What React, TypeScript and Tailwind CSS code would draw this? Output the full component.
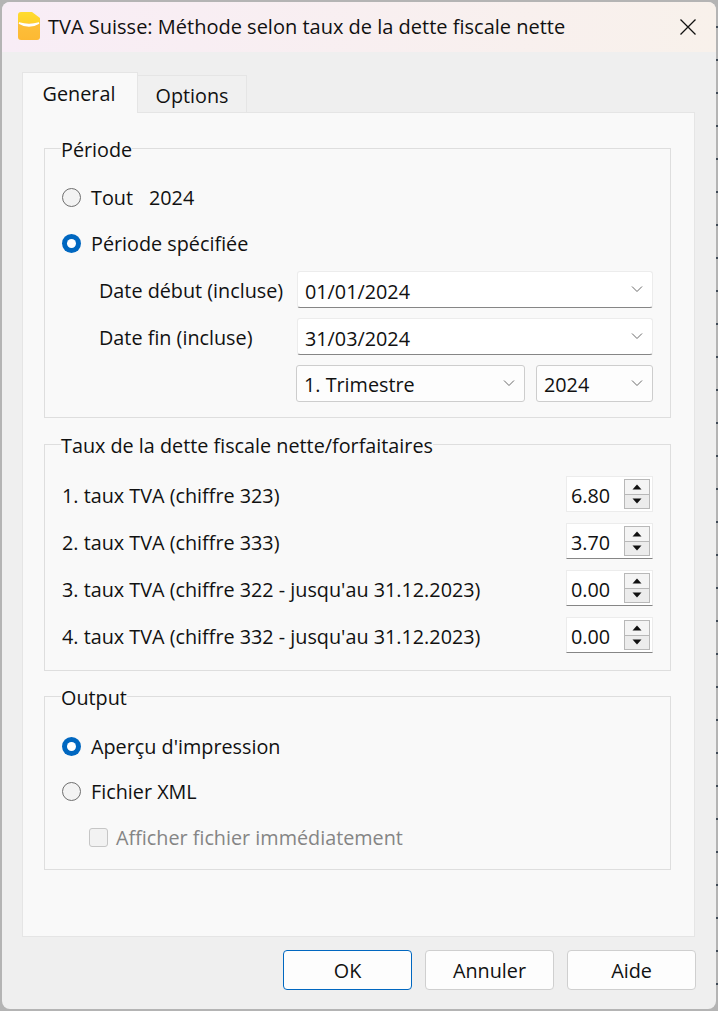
import { ReactNode } from "react";

const Chevron = () => (
  <svg width="12" height="8" viewBox="0 0 12 8" fill="none" className="shrink-0 -translate-y-[1px]">
    <path d="M1 1.5 L6 6.5 L11 1.5" stroke="#6a6a6a" strokeWidth="1" />
  </svg>
);

const Radio = ({ checked = false }: { checked?: boolean }) =>
  checked ? (
    <span className="flex h-[19px] w-[19px] shrink-0 items-center justify-center rounded-full bg-[#0067c0]">
      <span className="h-[9px] w-[9px] rounded-full bg-white" />
    </span>
  ) : (
    <span className="h-[19px] w-[19px] shrink-0 rounded-full border border-[#6f6f6f] bg-[#f3f3f3]" />
  );

// text sits a touch lower than the box centre, as in the reference
const Text = ({ children, className }: { children: ReactNode; className?: string }) => (
  <span className={`translate-y-[1px] ${className ?? ""}`}>{children}</span>
);

const Group = ({ title, className, children }: { title: string; className: string; children: ReactNode }) => (
  <fieldset className={`ml-[21px] mr-[23px] border border-[#dedede] pl-[17px] pr-[17px] ${className}`}>
    <legend className="-ml-px h-[26px] px-0 leading-[26px]">
      <span className="inline-block translate-y-[2px]">{title}</span>
    </legend>
    {children}
  </fieldset>
);

const Combo = ({ value, className }: { value: string; className: string }) => (
  <div
    className={`flex h-[37px] items-center justify-between rounded-[3px] border border-[#ececec] border-b-[#868686] bg-white pl-[7px] pr-[9px] ${className}`}
  >
    <span className="translate-y-[2px]">{value}</span>
    <Chevron />
  </div>
);

const Select = ({ value, className }: { value: string; className: string }) => (
  <div
    className={`flex h-[37px] items-center justify-between rounded-[3px] border border-[#cdcdcd] bg-[#fdfdfd] pl-[7px] pr-[9px] ${className}`}
  >
    <Text>{value}</Text>
    <Chevron />
  </div>
);

const Spin = ({ value, focused = false }: { value: string; focused?: boolean }) => (
  <div
    className={`flex h-[36px] w-[87px] items-center justify-between border border-[#ececec] bg-white pl-[4px] pr-[2px] ${
      focused ? "" : "border-b-[#868686]"
    }`}
  >
    <span className="translate-y-[2px]">{value}</span>
    <div className="flex h-[30px] w-[26px] flex-col border border-[#b8b8b8] bg-[#efefef]">
      <div className="flex flex-1 items-center justify-center border-b border-[#b8b8b8] bg-[#f4f4f4]">
        <svg width="10" height="6" viewBox="0 0 10 6">
          <path d="M5 0.5 L9.5 5.5 H0.5 Z" fill="#111" />
        </svg>
      </div>
      <div className="flex flex-1 items-center justify-center bg-[#ececec]">
        <svg width="10" height="6" viewBox="0 0 10 6">
          <path d="M0.5 0.5 H9.5 L5 5.5 Z" fill="#111" />
        </svg>
      </div>
    </div>
  </div>
);

const RateRow = ({ label, value, focused, className }: { label: string; value: string; focused?: boolean; className?: string }) => (
  <div className={`flex items-center justify-between ${className ?? ""}`}>
    <span className="translate-y-[2px]">{label}</span>
    <Spin value={value} focused={focused} />
  </div>
);

const DialogButton = ({ label, primary = false }: { label: string; primary?: boolean }) => (
  <button
    className={`h-[40px] w-[129px] rounded-[4px] border bg-[#fdfdfd] pt-[2px] ${
      primary ? "border-[#0067c0]" : "border-[#cfcfcf]"
    }`}
  >
    {label}
  </button>
);

export default function App() {
  return (
    <div className="flex h-[1011px] w-[718px] overflow-hidden bg-[#b4b4b4] pl-[2px] pt-[2px] font-['Open_Sans','Noto_Sans',sans-serif] text-[19.8px] text-[#111]">
      <div className="flex h-[1007px] w-[714px] shrink-0 flex-col overflow-hidden rounded-[8px] bg-[#efefef]">
        {/* title bar */}
        <div className="flex h-[50px] shrink-0 items-center bg-gradient-to-r from-[#f8edf6] to-[#f8f1eb] pl-[16px] pr-[20px]">
          <svg width="22" height="28" viewBox="0 0 22 28" className="mb-[2px] mr-[8px] shrink-0">
            <defs>
              <linearGradient id="logo-fill" x1="0" y1="0" x2="0" y2="1">
                <stop offset="0" stopColor="#ffdc2e" />
                <stop offset="0.4" stopColor="#ffd02c" />
                <stop offset="0.41" stopColor="#fdbf3a" />
                <stop offset="1" stopColor="#fdb933" />
              </linearGradient>
            </defs>
            <path
              d="M3 0 H14 L22 6 V25 a3 3 0 0 1 -3 3 H3 a3 3 0 0 1 -3 -3 V3 a3 3 0 0 1 3 -3 Z"
              fill="url(#logo-fill)"
            />
            <path d="M1 11 Q11 17 21 11 Q11 14 1 11 Z" fill="#fff" stroke="#fff" strokeWidth="1.5" />
          </svg>
          <span className="flex-1 text-[20px]">TVA Suisse: Méthode selon taux de la dette fiscale nette</span>
          <svg width="16" height="16" viewBox="0 0 16 16">
            <path d="M0.5 0.5 L15.5 15.5 M15.5 0.5 L0.5 15.5" stroke="#111" strokeWidth="1.3" />
          </svg>
        </div>

        {/* tabs */}
        <div className="ml-[20px] mt-[20px] flex h-[41px] items-end">
          <div className="relative z-10 flex h-[41px] w-[116px] items-center justify-center border border-b-0 border-[#e5e5e5] bg-[#f9f9f9] pr-[2px] pt-[2px]">
            General
          </div>
          <div className="flex h-[38px] w-[109px] items-center justify-center border border-l-0 border-[#e5e5e5] bg-[#f0f0f0] pt-[4px]">
            Options
          </div>
        </div>

        {/* tab pane */}
        <div className="-mt-px ml-[20px] h-[825px] w-[673px] border border-[#e5e5e5] bg-[#f9f9f9]">
          <Group title="Période" className="mt-[22px] h-[283px]">
            <div className="mt-[24px] flex h-[24px] items-center gap-[10px]">
              <Radio />
              <Text>Tout</Text>
              <Text className="ml-[6px]">2024</Text>
            </div>
            <div className="mt-[22px] flex h-[24px] items-center gap-[10px]">
              <Radio checked />
              <Text>Période spécifiée</Text>
            </div>
            <div className="mt-[16px] flex items-center">
              <Text className="ml-[37px] w-[198px]">Date début (incluse)</Text>
              <Combo value="01/01/2024" className="w-[356px]" />
            </div>
            <div className="mt-[10px] flex items-center">
              <Text className="ml-[37px] w-[198px]">Date fin (incluse)</Text>
              <Combo value="31/03/2024" className="w-[356px]" />
            </div>
            <div className="ml-[234px] mt-[10px] flex gap-[11px]">
              <Select value="1. Trimestre" className="w-[229px]" />
              <Select value="2024" className="w-[117px]" />
            </div>
          </Group>

          <Group title="Taux de la dette fiscale nette/forfaitaires" className="mt-[13px] h-[240px]">
            <RateRow label="1. taux TVA (chiffre 323)" value="6.80" focused className="mt-[19px]" />
            <RateRow label="2. taux TVA (chiffre 333)" value="3.70" className="mt-[11px]" />
            <RateRow label="3. taux TVA (chiffre 322 - jusqu'au 31.12.2023)" value="0.00" className="mt-[11px]" />
            <RateRow label="4. taux TVA (chiffre 332 - jusqu'au 31.12.2023)" value="0.00" className="mt-[11px]" />
          </Group>

          <Group title="Output" className="mt-[12px] h-[187px]">
            <div className="mt-[25px] flex h-[24px] items-center gap-[10px]">
              <Radio checked />
              <Text>Aperçu d'impression</Text>
            </div>
            <div className="mt-[21px] flex h-[24px] items-center gap-[10px]">
              <Radio />
              <Text>Fichier XML</Text>
            </div>
            <div className="ml-[27px] mt-[22px] flex h-[24px] items-center gap-[9px] text-[#858585]">
              <span className="h-[19px] w-[19px] shrink-0 rounded-[3px] border border-[#c6c6c6] bg-[#f2f2f2]" />
              <Text className="-ml-[1px]">Afficher fichier immédiatement</Text>
            </div>
          </Group>
        </div>

        {/* dialog buttons */}
        <div className="ml-[281px] mt-[13px] flex gap-[13px]">
          <DialogButton label="OK" primary />
          <DialogButton label="Annuler" />
          <DialogButton label="Aide" />
        </div>
      </div>

      {/* sliver of the window behind */}
      <div className="h-full w-[2px] shrink-0 bg-[repeating-linear-gradient(to_bottom,#b4b4b4_0,#b4b4b4_24px,#3f4a55_24px,#3f4a55_26px,#b4b4b4_26px,#b4b4b4_33px)]" />
    </div>
  );
}
